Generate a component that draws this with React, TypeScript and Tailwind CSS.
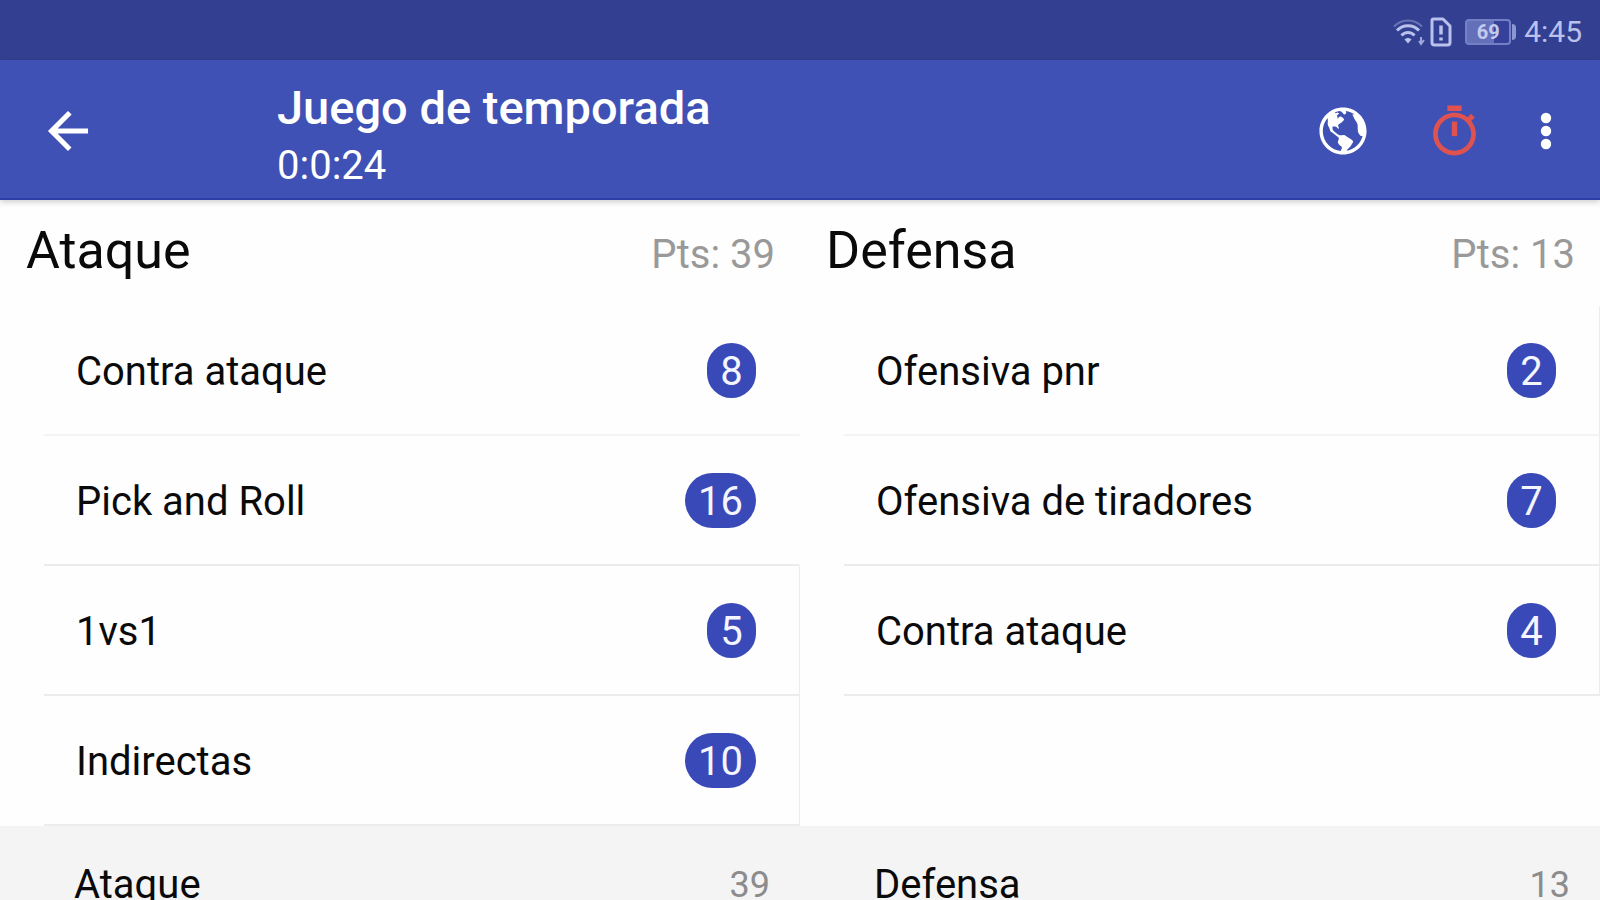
import { IoMdArrowBack, IoMdGlobe, IoMdStopwatch } from "react-icons/io";

type Play = { name: string; count: number; edge: boolean };
type Side = { title: string; points: number; plays: Play[] };

const sides: Side[] = [
  {
    title: "Ataque",
    points: 39,
    plays: [
      { name: "Contra ataque", count: 8, edge: false },
      { name: "Pick and Roll", count: 16, edge: false },
      { name: "1vs1", count: 5, edge: true },
      { name: "Indirectas", count: 10, edge: true },
    ],
  },
  {
    title: "Defensa",
    points: 13,
    plays: [
      { name: "Ofensiva pnr", count: 2, edge: true },
      { name: "Ofensiva de tiradores", count: 7, edge: true },
      { name: "Contra ataque", count: 4, edge: true },
    ],
  },
];

function WifiIcon() {
  return (
    <svg className="h-7 w-8" viewBox="0 0 32 28" fill="none" stroke="currentColor" aria-hidden="true">
      <path d="M1 8.500C9 .5 21 .5 29 8.500" strokeWidth="2" opacity="0.4" />
      <path d="M4 12.500C10 6 20 6 26 12.500" strokeWidth="3" />
      <path d="M8.500 17.500C12 13.500 18 13.500 21.500 17.500" strokeWidth="3" />
      <path d="M11.500 21.500C13.500 19.500 16.500 19.500 18.500 21.500L15 25.500Z" fill="currentColor" stroke="none" />
      <path d="M28 19v7M26 23l2 3 3-4" strokeWidth="2" opacity="0.8" />
    </svg>
  );
}

function SimAlertIcon() {
  return (
    <svg className="h-8 w-6" viewBox="0 0 24 32" fill="none" stroke="currentColor" aria-hidden="true">
      <path d="M3 4.500Q3 3 4.500 3H14L21 10V26.500Q21 29 18.500 29H5.500Q3 29 3 26.500Z" strokeWidth="3" strokeLinejoin="round" />
      <path d="M12 9.500V18.500M12 21.500V24.500" strokeWidth="3.500" />
    </svg>
  );
}

function Battery({ level }: { level: number }) {
  return (
    <div className="flex items-center" role="img" aria-label={`${level}%`}>
      <div className="flex h-[26px] w-[46px] items-center justify-center rounded-[4px] border-2 border-[#7480c4] bg-linear-to-r from-[#6470b9] from-65% to-[#35419a] to-65% text-[20px] leading-none font-bold text-[#c3caf0]">
        {level}
      </div>
      <div className="ml-px h-4 w-1 rounded-r-sm bg-[#8d97d3]" />
    </div>
  );
}

function StatusBar() {
  return (
    <div className="flex h-[60px] shrink-0 items-center justify-end bg-[#333f91] pt-1 pr-[18px] text-[#b9c1ec]">
      <WifiIcon />
      <div className="ml-1">
        <SimAlertIcon />
      </div>
      <div className="ml-3">
        <Battery level={69} />
      </div>
      <time className="ml-2 text-[30px] leading-8">4:45</time>
    </div>
  );
}

function AppBar() {
  return (
    <header className="z-10 flex h-[140px] shrink-0 items-center border-b-2 border-[#2f3da6] bg-[#3f51b5] pt-[3px] pr-6 pl-[38px] text-white shadow-[0_2px_6px_rgba(0,0,0,0.2)]">
      <button type="button" aria-label="Volver" className="flex size-[60px] items-center justify-center">
        <IoMdArrowBack className="size-[60px]" />
      </button>
      <div className="ml-[179px] flex-1 pt-3">
        <h1 className="text-[47px] leading-[58px] font-medium">Juego de temporada</h1>
        <p className="text-[40px] leading-[58px]">0:0:24</p>
      </div>
      <button type="button" aria-label="Mundo" className="flex size-[60px] items-center justify-center">
        <IoMdGlobe className="size-[58px]" />
      </button>
      <button type="button" aria-label="Cronómetro" className="ml-[51px] flex size-[60px] items-center justify-center text-[#e0524f]">
        <IoMdStopwatch className="size-[57px]" />
      </button>
      <button type="button" aria-label="Más opciones" className="ml-[32px] flex size-[60px] items-center justify-center">
        <svg className="h-10 w-4" viewBox="0 0 16 40" fill="currentColor" aria-hidden="true">
          <circle cx="8" cy="7" r="5.200" />
          <circle cx="8" cy="20" r="5.200" />
          <circle cx="8" cy="33" r="5.200" />
        </svg>
      </button>
    </header>
  );
}

function PlayRow({ play }: { play: Play }) {
  return (
    <li className="group pl-11">
      <button
        type="button"
        className={
          "flex h-[130px] w-full items-center justify-between border-r border-b-2 border-b-[#ececec] pr-[43px] pl-8 text-left group-first:border-b-[#f4f4f4] " +
          (play.edge ? "border-r-[#ececec]" : "border-r-transparent")
        }
      >
        <span className="pt-1 text-[40px] leading-[48px]">{play.name}</span>
        <span className="flex h-[55px] min-w-[49px] items-center justify-center rounded-full bg-[#3949b8] px-[13px] pt-1 text-[40px] leading-none text-[#f4f5ff]">
          {play.count}
        </span>
      </button>
    </li>
  );
}

function SideColumn({ side }: { side: Side }) {
  return (
    <section>
      <div className="flex h-[106px] items-start justify-between pt-5 pr-[25px] pl-[26px]">
        <h2 className="text-[52px] leading-[62px]">{side.title}</h2>
        <span className="pt-1 text-[40px] leading-[62px] text-[#999999]">Pts: {side.points}</span>
      </div>
      <ul>
        {side.plays.map((play) => (
          <PlayRow key={play.name} play={play} />
        ))}
      </ul>
    </section>
  );
}

export default function App() {
  return (
    <div className="flex h-screen flex-col overflow-hidden bg-[#fefefe] font-['Roboto',sans-serif] text-[#0a0a0a]">
      <StatusBar />
      <AppBar />
      <main>
        <div className="grid grid-cols-2">
          {sides.map((side) => (
            <SideColumn key={side.title} side={side} />
          ))}
        </div>
        <div className="grid grid-cols-2 bg-[#f4f4f4]">
          {sides.map((side) => (
            <div key={side.title} className="flex h-[118px] items-center justify-between pr-[30px] pl-[74px]">
              <span className="text-[40px] leading-[48px]">{side.title}</span>
              <span className="text-[36px] leading-[48px] text-[#8c8c8c]">{side.points}</span>
            </div>
          ))}
        </div>
      </main>
    </div>
  );
}
